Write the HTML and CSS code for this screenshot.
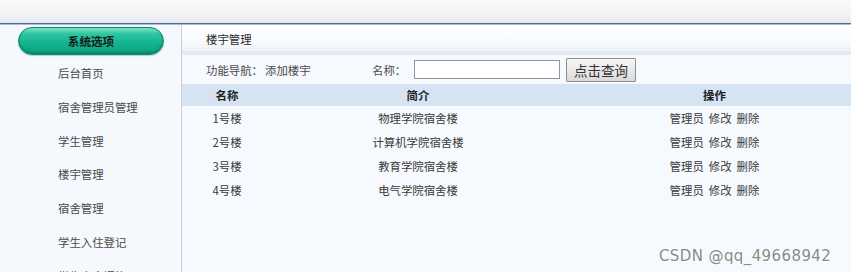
FILE: index.html
```html
<!DOCTYPE html>
<html lang="zh-CN">
<head>
<meta charset="utf-8">
<title>楼宇管理</title>
<link rel="stylesheet" href="styles.css">
</head>
<body>
<div class="topbar"></div>
<div class="main">
  <aside class="sidebar">
    <div class="pill">系统选项</div>
    <ul class="menu">
      <li>后台首页</li>
      <li>宿舍管理员管理</li>
      <li>学生管理</li>
      <li>楼宇管理</li>
      <li>宿舍管理</li>
      <li>学生入住登记</li>
      <li>学生宿舍调换</li>
    </ul>
  </aside>
  <section class="content">
    <div class="title">楼宇管理</div>
    <div class="band"></div>
    <div class="nav">
      <span class="nav-label">功能导航：</span>
      <span class="nav-link">添加楼宇</span>
      <span class="search-label">名称：</span>
      <input class="search-input" type="text">
      <button class="search-btn">点击查询</button>
    </div>
    <table class="grid">
      <thead>
        <tr><th class="c1">名称</th><th class="c2">简介</th><th class="c3">操作</th></tr>
      </thead>
      <tbody>
        <tr><td class="c1">1号楼</td><td class="c2">物理学院宿舍楼</td><td class="c3"><span class="act">管理员</span><span class="act">修改</span><span class="act">删除</span></td></tr>
        <tr><td class="c1">2号楼</td><td class="c2">计算机学院宿舍楼</td><td class="c3"><span class="act">管理员</span><span class="act">修改</span><span class="act">删除</span></td></tr>
        <tr><td class="c1">3号楼</td><td class="c2">教育学院宿舍楼</td><td class="c3"><span class="act">管理员</span><span class="act">修改</span><span class="act">删除</span></td></tr>
        <tr><td class="c1">4号楼</td><td class="c2">电气学院宿舍楼</td><td class="c3"><span class="act">管理员</span><span class="act">修改</span><span class="act">删除</span></td></tr>
      </tbody>
    </table>
    <div class="watermark">CSDN @qq_49668942</div>
  </section>
</div>
</body>
</html>
```

FILE: styles.css
```css
html, body {
  margin: 0;
  padding: 0;
  height: 100%;
  overflow: hidden;
}
body {
  font-family: "Noto Sans CJK SC", "DejaVu Sans", sans-serif;
  font-size: 11.4px;
  color: #3a3a3a;
  background: #f5f8fc;
}
.topbar {
  height: 23px;
  background: linear-gradient(#fbfbfb, #f2f3f5 60%, #e6e9ed);
  border-bottom: 1px solid #4c6aa3;
  box-shadow: 0 1px 0 #a9b9d6;
}
.main {
  display: flex;
  height: 248px;
  margin-top: 1px;
}
.sidebar {
  width: 182px;
  flex: none;
  border-right: 1px solid #c3d0e0;
  background: #f5f8fc;
  padding-top: 2px;
  box-sizing: border-box;
}
.pill {
  margin-left: 18px;
  width: 146px;
  height: 28px;
  box-sizing: border-box;
  border: 1px solid #0b8c6d;
  border-radius: 15px;
  background: linear-gradient(#7fe2c9 0%, #2fc7a2 22%, #14b591 55%, #0fa886 85%, #0d9a7b 100%);
  box-shadow: inset 0 -2px 3px rgba(0, 90, 70, 0.35), 0 1px 1px rgba(0, 80, 60, 0.25);
  text-align: center;
  line-height: 26px;
  font-weight: bold;
  color: #1a1a1a;
  font-size: 11.6px;
}
.menu {
  list-style: none;
  margin: 0;
  padding: 2px 0 0;
}
.menu li {
  height: 33.8px;
  line-height: 33.8px;
  padding-left: 58px;
  color: #4a4a4a;
}
.content {
  flex: 1;
  position: relative;
  background: #f6f9fd;
  overflow: hidden;
}
.title {
  height: 24px;
  line-height: 24px;
  padding-top: 2px;
  padding-left: 24px;
  background: linear-gradient(#ffffff, #f8fafd 60%, #eef3f9);
  color: #2a2a2a;
}
.band {
  height: 4px;
  background: #e3eaf3;
}
.nav {
  display: flex;
  align-items: center;
  height: 29px;
  padding-left: 24px;
  color: #4a4a4a;
}
.nav-label {
  width: 59px;
}
.nav-link {
  width: 107px;
}
.search-label {
  width: 42px;
}
.search-input {
  width: 146px;
  height: 19px;
  box-sizing: border-box;
  margin: 0;
  padding: 0;
  border: 1px solid #8a96a3;
  background: #fff;
}
.search-btn {
  margin-left: 6px;
  width: 70px;
  height: 24px;
  box-sizing: border-box;
  padding: 0;
  border: 1px solid #8e8e8e;
  border-radius: 1px;
  background: linear-gradient(#f6f6f6, #e9e9e9 50%, #d9d9d9);
  font-family: "Noto Sans CJK SC", sans-serif;
  font-size: 13.5px;
  color: #333;
}
.grid {
  width: 100%;
  border-collapse: collapse;
  table-layout: fixed;
}
.grid th {
  height: 22px;
  background: #d5e3f3;
  font-weight: bold;
  color: #222;
  padding: 0;
  text-align: center;
}
.grid td {
  height: 24px;
  padding: 0;
  text-align: center;
  color: #3a3a3a;
}
.c1 { width: 90px; }
.c2 { width: 292px; }
.grid .c3 { padding-left: 14px; }
.act + .act {
  margin-left: 5px;
}
.watermark {
  position: absolute;
  left: 477px;
  top: 222px;
  font-family: "DejaVu Sans", sans-serif;
  font-size: 15px;
  color: #8a8a8a;
  text-shadow: 0 0 1px #fff, 1px 1px 0 #fff;
  letter-spacing: 0.4px;
}
```
